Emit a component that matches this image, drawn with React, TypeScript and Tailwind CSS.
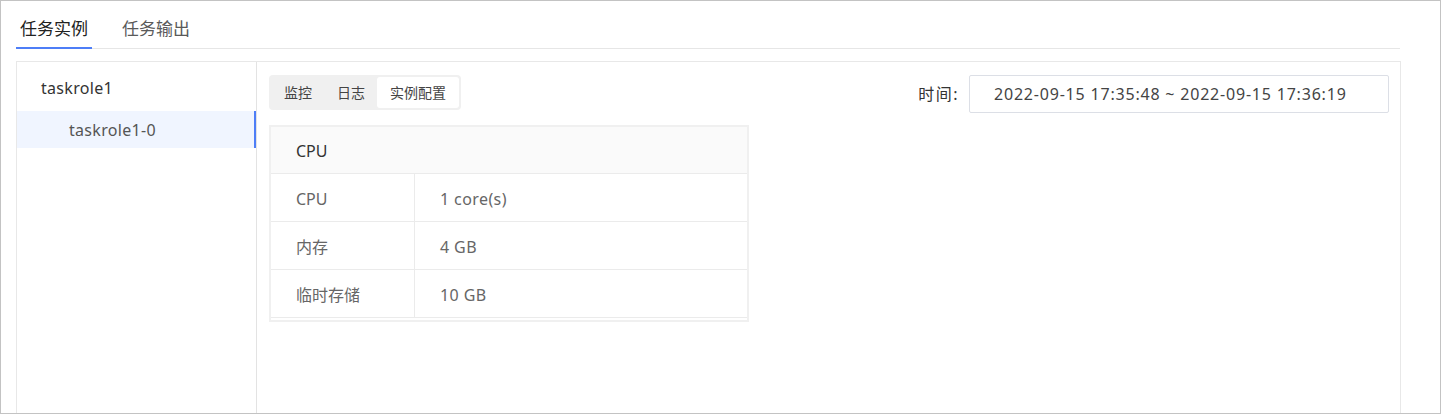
import React from "react";

const rows = [
  { label: "CPU", value: "1 core(s)" },
  { label: "内存", value: "4 GB" },
  { label: "临时存储", value: "10 GB" },
];

export default function App() {
  return (
    <div className="h-[414px] w-[1441px] overflow-hidden border border-[#c3c3c3] bg-white font-['Noto_Sans','Noto_Sans_CJK_SC',sans-serif] text-[#333]">
      {/* top tabs */}
      <div className="mx-[15px] mt-[16px] flex w-[1384px] gap-[26px] border-b border-[#e6e6e6]">
        <div className="-mb-px flex h-[32px] items-start border-b-2 border-[#4e7ef7] px-1 text-[17px] leading-[24px] text-[#222]">
          任务实例
        </div>
        <div className="-mb-px flex h-[32px] items-start px-1 text-[17px] leading-[24px] text-[#5a5a5a]">
          任务输出
        </div>
      </div>

      {/* main panel */}
      <div className="mx-[15px] mt-[12px] flex h-[400px] w-[1385px] border border-[#e8e8e8]">
        {/* instance list */}
        <div className="w-[240px] shrink-0 border-r border-[#e3e3e3]">
          <div className="flex h-[49px] items-center pl-[24px] pt-[2px] text-[16px] tracking-[0.3px]">taskrole1</div>
          <div className="flex h-[37px] items-center border-r-2 border-[#4e7ef7] bg-[#f0f5ff] pl-[52px] text-[16px] tracking-[0.3px] text-[#555]">
            taskrole1-0
          </div>
        </div>

        {/* detail */}
        <div className="flex-1 pl-[12px] pr-[11px] pt-[13px]">
          <div className="flex items-start justify-between">
            <div className="flex h-[35px] items-stretch rounded-[4px] bg-[#f0f0f0] py-[2px] pl-[2px] pr-[2px] text-[14px] text-[#444]">
              <div className="flex items-center px-[13px]">监控</div>
              <div className="flex items-center px-3">日志</div>
              <div className="flex items-center rounded-[3px] bg-white px-[13px]">实例配置</div>
            </div>
            <div className="flex items-center gap-[10px]">
              <span className="text-[16px] tracking-[1.5px] text-[#333]">时间:</span>
              <div className="flex h-[38px] w-[420px] items-center rounded-[2px] border border-[#dcdfe6] pl-[24px] text-[16px] tracking-[0.8px] text-[#444]">
                2022-09-15 17:35:48 ~ 2022-09-15 17:36:19
              </div>
            </div>
          </div>

          {/* resource table */}
          <div className="mt-[12px] w-[480px] border-2 border-[#f0f0f0] pb-[2px]">
            <div className="flex h-[47px] items-center border-b border-[#ebebeb] bg-[#fafafa] pl-[25px] pt-[2px] text-[16px] text-[#333]">
              CPU
            </div>
            {rows.map((r) => (
              <div key={r.label} className="flex h-[48px] border-b border-[#ebebeb] text-[16px] text-[#666]">
                <div className="flex w-[144px] items-center border-r border-[#ebebeb] pl-[25px] pt-[3px]">{r.label}</div>
                <div className="flex items-center pl-[25px] pt-[3px] tracking-[0.4px]">{r.value}</div>
              </div>
            ))}
          </div>
        </div>
      </div>
    </div>
  );
}
